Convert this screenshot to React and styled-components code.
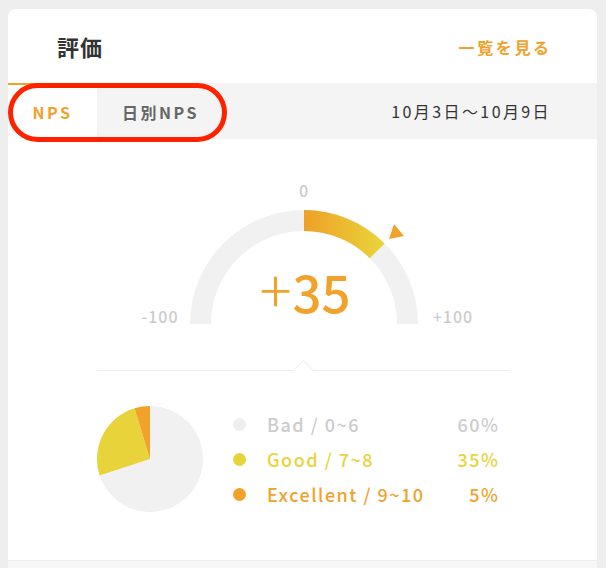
import React from 'react'
import styled, { createGlobalStyle } from 'styled-components'

const GlobalStyle = createGlobalStyle`
  html, body {
    margin: 0;
    padding: 0;
    background: #eeeeee;
  }
  body {
    font-family: "Noto Sans CJK JP", "Noto Sans", sans-serif;
  }
`

const ORANGE = '#f0a22a'
const YELLOW = '#e8d33a'
const GRAY = '#f1f1f1'

const legend = [
  { label: 'Bad / 0~6', value: '60%', color: '#cccccc', dot: '#eeeeee' },
  { label: 'Good / 7~8', value: '35%', color: YELLOW, dot: YELLOW },
  { label: 'Excellent / 9~10', value: '5%', color: ORANGE, dot: ORANGE },
]

function polar(cx, cy, r, deg) {
  const a = (deg * Math.PI) / 180
  return [cx + r * Math.sin(a), cy - r * Math.cos(a)]
}

function slice(cx, cy, r, from, to) {
  const [x1, y1] = polar(cx, cy, r, from)
  const [x2, y2] = polar(cx, cy, r, to)
  const large = to - from > 180 ? 1 : 0
  return `M${cx} ${cy} L${x1} ${y1} A${r} ${r} 0 ${large} 1 ${x2} ${y2} Z`
}

function Gauge() {
  const cx = 296
  const cy = 185
  const R = 114
  const r = 93
  const [ox, oy] = polar(cx, cy, R, 45)
  const [ix, iy] = polar(cx, cy, r, 45)
  return (
    <GaugeSvg width="589" height="232" viewBox="0 0 589 232">
      <defs>
        <linearGradient id="arcGrad" gradientUnits="userSpaceOnUse" x1={cx} y1="0" x2={ox} y2="0">
          <stop offset="0" stopColor="#eea026" />
          <stop offset="1" stopColor="#e9d53b" />
        </linearGradient>
      </defs>
      <path
        d={`M${cx - R} ${cy} A${R} ${R} 0 0 1 ${cx + R} ${cy} L${cx + r} ${cy} A${r} ${r} 0 0 0 ${cx - r} ${cy} Z`}
        fill={GRAY}
      />
      <path
        d={`M${cx} ${cy - R} A${R} ${R} 0 0 1 ${ox} ${oy} L${ix} ${iy} A${r} ${r} 0 0 0 ${cx} ${cy - r} Z`}
        fill="url(#arcGrad)"
      />
      <polygon points="386,85 381,100 396,97" fill={ORANGE} />
      <ScaleText x={cx} y="58">0</ScaleText>
      <ScaleText x="152" y="184">-100</ScaleText>
      <ScaleText x="445" y="184">+100</ScaleText>
      <ValueText x={cx + 1} y="174">
        <tspan fontWeight="300" fontSize="60">+</tspan>
        <tspan dx="1">35</tspan>
      </ValueText>
    </GaugeSvg>
  )
}

function Pie() {
  return (
    <svg width="106" height="106" viewBox="0 0 106 106">
      <path d={slice(53, 53, 53, 0, 252)} fill={GRAY} />
      <path d={slice(53, 53, 53, 252, 343)} fill={YELLOW} />
      <path d={slice(53, 53, 53, 343, 360)} fill={ORANGE} />
    </svg>
  )
}

export default function App() {
  return (
    <>
      <GlobalStyle />
      <Card>
        <Header>
          <Title>評価</Title>
          <MoreLink>一覧を見る</MoreLink>
        </Header>
        <TabBar>
          <Tab active>NPS</Tab>
          <Tab>日別NPS</Tab>
          <DateRange>10月3日〜10月9日</DateRange>
          <Annotation />
        </TabBar>
        <GaugeSection>
          <Gauge />
          <Divider />
        </GaugeSection>
        <PieSection>
          <Pie />
          <Legend>
            {legend.map((item) => (
              <LegendRow key={item.label} color={item.color}>
                <Dot color={item.dot} />
                <LegendLabel>{item.label}</LegendLabel>
                <LegendValue>{item.value}</LegendValue>
              </LegendRow>
            ))}
          </Legend>
        </PieSection>
        <Footer />
      </Card>
    </>
  )
}

const Card = styled.div`
  margin: 9px 0 0 8px;
  width: 589px;
  background: #ffffff;
  border-radius: 8px 8px 0 0;
  overflow: hidden;
`

const Header = styled.div`
  height: 74px;
  padding: 0 48px 0 49px;
  display: flex;
  align-items: center;
  justify-content: space-between;
`

const Title = styled.h2`
  margin: 0;
  font-size: 22px;
  font-weight: 700;
  color: #333333;
  letter-spacing: 1px;
`

const MoreLink = styled.a`
  font-size: 16px;
  font-weight: 700;
  color: ${ORANGE};
  letter-spacing: 2.6px;
  margin-right: -2.6px;
  margin-top: 2px;
  cursor: pointer;
`

const TabBar = styled.div`
  position: relative;
  height: 56px;
  background: #f4f4f4;
  display: flex;
  align-items: stretch;
`

const Tab = styled.div`
  display: flex;
  align-items: center;
  justify-content: center;
  box-sizing: border-box;
  width: ${(p) => (p.active ? '89px' : 'auto')};
  padding: ${(p) => (p.active ? '0' : '0 25px')};
  background: ${(p) => (p.active ? '#ffffff' : 'transparent')};
  border-top: 2px solid ${(p) => (p.active ? ORANGE : 'transparent')};
  color: ${(p) => (p.active ? ORANGE : '#666666')};
  font-size: 16px;
  font-weight: 700;
  letter-spacing: 2.5px;
`

const DateRange = styled.div`
  margin-left: auto;
  padding-right: 46px;
  display: flex;
  align-items: center;
  font-size: 16px;
  color: #333333;
  letter-spacing: 2.4px;
`

const Annotation = styled.div`
  position: absolute;
  left: 0;
  top: 0;
  width: 219px;
  height: 59px;
  box-sizing: border-box;
  border: 5px solid #ff2200;
  border-radius: 30px;
  pointer-events: none;
`

const GaugeSection = styled.div`
  position: relative;
  height: 232px;
`

const GaugeSvg = styled.svg`
  display: block;
`

const ScaleText = styled.text`
  font-family: "Noto Sans CJK JP", "Noto Sans", sans-serif;
  font-size: 16px;
  font-weight: 500;
  fill: #cccccc;
  text-anchor: middle;
  letter-spacing: 1px;
`

const ValueText = styled.text`
  font-family: "Noto Sans CJK JP", "Noto Sans", sans-serif;
  font-size: 51px;
  font-weight: 500;
  fill: ${ORANGE};
  text-anchor: middle;
`

const Divider = styled.div`
  position: absolute;
  left: 89px;
  right: 87px;
  bottom: 0;
  border-top: 1.5px solid #eeeeee;

  &::after {
    content: '';
    position: absolute;
    left: 199px;
    top: -8px;
    width: 14px;
    height: 14px;
    background: #ffffff;
    border-top: 1.5px solid #eeeeee;
    border-left: 1.5px solid #eeeeee;
    transform: rotate(45deg);
  }
`

const PieSection = styled.div`
  height: 189px;
  box-sizing: border-box;
  padding: 35px 0 0 89px;
  display: flex;
  align-items: flex-start;
  gap: 30px;
`

const Legend = styled.div`
  width: 265px;
  padding-top: 5px;
  display: flex;
  flex-direction: column;
  gap: 9px;
`

const LegendRow = styled.div`
  display: flex;
  align-items: center;
  height: 26px;
  color: ${(p) => p.color};
  font-size: 18px;
  font-weight: 500;
  letter-spacing: 1.5px;
`

const Dot = styled.span`
  width: 13px;
  height: 13px;
  border-radius: 50%;
  background: ${(p) => p.color};
  margin-right: 21px;
  flex-shrink: 0;
`

const LegendLabel = styled.span`
  flex: 1;
`

const LegendValue = styled.span`
  margin-right: -1.5px;
`

const Footer = styled.div`
  height: 20px;
  background: #f7f7f7;
  border-top: 1px solid #ececec;
`
